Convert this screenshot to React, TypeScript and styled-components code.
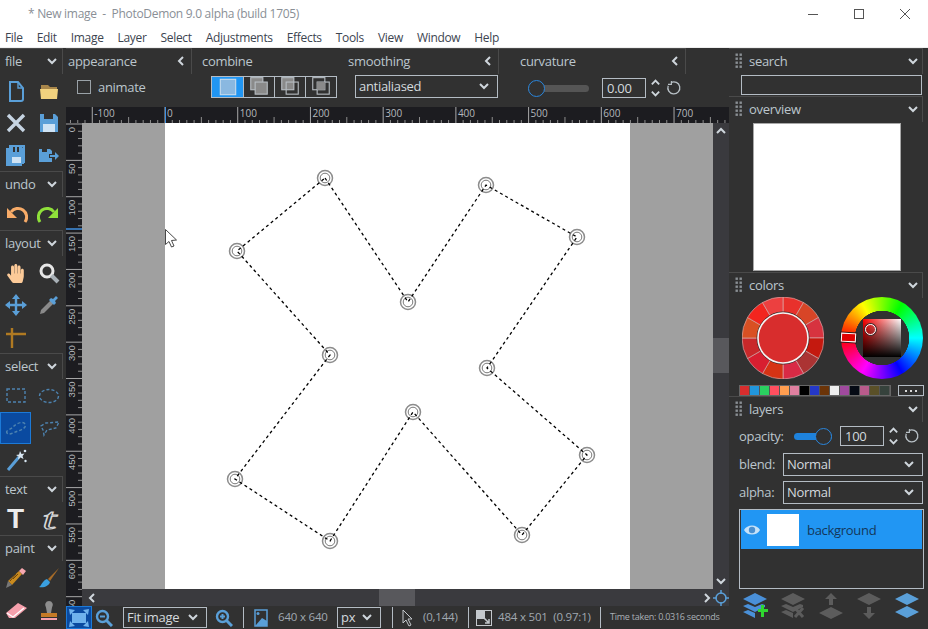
import React from "react";
import styled, { createGlobalStyle } from "styled-components";
import { FaHandPaper } from "react-icons/fa";

const GlobalStyle = createGlobalStyle`
  html, body {
    margin: 0;
    padding: 0;
    background: #313131;
  }
  * {
    box-sizing: border-box;
  }
`;

const BLUE = "#5a9fd8";
const DIM = "#4d83b0";
const LINE = "#b4bcc4";

function Chevron({ dir = "down", size = 12 }: { dir?: "down" | "left" | "right" | "up"; size?: number }) {
  const points = {
    down: "2,4 6,8 10,4",
    up: "2,8 6,4 10,8",
    left: "8,2 4,6 8,10",
    right: "4,2 8,6 4,10",
  }[dir];
  return (
    <svg width={size} height={size} viewBox="0 0 12 12">
      <polyline points={points} fill="none" stroke="#cfd6dc" strokeWidth="2" />
    </svg>
  );
}

function Spinner() {
  return (
    <SpinnerBox>
      <Chevron dir="up" size={11} />
      <Chevron dir="down" size={11} />
    </SpinnerBox>
  );
}

function Reset() {
  return (
    <ResetIcon width="16" height="16" viewBox="0 0 16 16">
      <path d="M5 2.600a6 6 0 1 1-2.800 3.200" fill="none" stroke="#b8c0c6" strokeWidth="1.300" />
      <path d="M5.400 1v3.400H2" fill="none" stroke="#b8c0c6" strokeWidth="1.100" />
    </ResetIcon>
  );
}

function Grip() {
  const dots = [0, 1, 2, 3].flatMap((r) => [0, 1].map((c) => [c * 4 + 0.5, r * 4 + 0.5]));
  return (
    <GripBox width="7" height="15" viewBox="0 0 7 15">
      {dots.map(([x, y]) => (
        <rect key={`${x}-${y}`} x={x} y={y} width="2.400" height="2.400" fill="#8a8f94" />
      ))}
    </GripBox>
  );
}

const icons: Record<string, React.ReactNode> = {
  newFile: (
    <svg width="24" height="24" viewBox="0 0 24 24">
      <path d="M6 3h8l5 6v11a2 2 0 0 1-2 2H6z" fill="none" stroke={BLUE} strokeWidth="2" />
      <path d="M14 3v6h5" fill="none" stroke={BLUE} strokeWidth="1.400" />
    </svg>
  ),
  open: (
    <svg width="24" height="24" viewBox="0 0 24 24">
      <path d="M4 6h7l2 2h7v3H4z" fill="#a8864a" />
      <path d="M3 10h18l-1 10H4z" fill="#f2d27e" />
    </svg>
  ),
  close: (
    <svg width="24" height="24" viewBox="0 0 24 24">
      <path d="M4 4l16 16M20 4L4 20" stroke="#c6d4e2" strokeWidth="3.400" />
    </svg>
  ),
  save: (
    <svg width="24" height="24" viewBox="0 0 24 24">
      <path d="M3 3h15l3 3v15H3z" fill={BLUE} />
      <rect x="7" y="3" width="9" height="5" fill="#313131" />
      <rect x="6" y="13" width="12" height="8" fill="#cfe3f4" />
    </svg>
  ),
  saveAs: (
    <svg width="24" height="24" viewBox="0 0 24 24">
      <path d="M5 2h16v18h-2V4H5zM2 5h3v16h13v2H2z" fill={BLUE} />
      <path d="M5 4h13l2 2v15H5z" fill={BLUE} />
      <path d="M9 4h2v5H9zM13 4h2v5h-2z" fill="#313131" />
      <rect x="8" y="14" width="9" height="6" fill="#cfe3f4" />
    </svg>
  ),
  exportCopy: (
    <svg width="24" height="24" viewBox="0 0 24 24">
      <path d="M2 6h11l2 2v3h-3v4h3v4H2z" fill={BLUE} />
      <rect x="5" y="6" width="5" height="3" fill="#313131" />
      <path d="M13 12h5V9l4 4-4 4v-3h-5z" fill={BLUE} />
    </svg>
  ),
  undo: (
    <svg width="24" height="24" viewBox="0 0 24 24">
      <path d="M21 20A8.500 8.500 0 0 0 7 10" fill="none" stroke="#f7ab68" strokeWidth="3" />
      <path d="M3 6v10h10z" fill="#f7ab68" />
    </svg>
  ),
  redo: (
    <svg width="24" height="24" viewBox="0 0 24 24">
      <path d="M3 20A8.500 8.500 0 0 1 17 10" fill="none" stroke="#8fe03a" strokeWidth="3" />
      <path d="M21 6v10H11z" fill="#8fe03a" />
    </svg>
  ),
  hand: <FaHandPaper size={19} color="#fcca98" />,
  zoom: (
    <svg width="24" height="24" viewBox="0 0 24 24">
      <circle cx="10" cy="10" r="6" fill="none" stroke="#e6e6e6" strokeWidth="3" />
      <path d="M14.500 14.500L21 21" stroke="#a8b0b6" strokeWidth="4" />
    </svg>
  ),
  move: (
    <svg width="24" height="24" viewBox="0 0 24 24">
      <path d="M12 3v18M3 12h18" stroke={BLUE} strokeWidth="2.400" />
      <path d="M12 1l4 5H8zM12 23l-4-5h8zM1 12l5-4v8zM23 12l-5 4V8z" fill={BLUE} />
    </svg>
  ),
  dropper: (
    <svg width="24" height="24" viewBox="0 0 24 24">
      <path d="M3 21l1-4L14 7l3 3L7 20z" fill="#8a8a8a" />
      <path d="M14 5l2 1 3-3 2 2-3 3 1 2-2 2-5-5z" fill={BLUE} />
    </svg>
  ),
  line: (
    <svg width="24" height="24" viewBox="0 0 24 24">
      <path d="M2 9h20M8 3v20" stroke="#b07a22" strokeWidth="2.400" />
    </svg>
  ),
  rectSelect: (
    <svg width="24" height="24" viewBox="0 0 24 24">
      <rect x="3" y="5" width="18" height="13" fill="none" stroke={DIM} strokeWidth="1.400" strokeDasharray="3 2" />
    </svg>
  ),
  ellipseSelect: (
    <svg width="24" height="24" viewBox="0 0 24 24">
      <ellipse cx="12" cy="12" rx="9.500" ry="6.500" fill="none" stroke={DIM} strokeWidth="1.400" strokeDasharray="3 2" />
    </svg>
  ),
  lassoSelect: (
    <svg width="24" height="24" viewBox="0 0 24 24">
      <path d="M3 17c-2-3 4-3 7-7 3-3 9-5 11-2s-3 6-7 7-9 5-11 2z" fill="none" stroke={DIM} strokeWidth="1.400" strokeDasharray="3 2" />
    </svg>
  ),
  polySelect: (
    <svg width="24" height="24" viewBox="0 0 24 24">
      <path d="M4 10l5-3 13-1-3 6-9 2-3 5-1-5z" fill="none" stroke={DIM} strokeWidth="1.400" strokeDasharray="3 2" />
    </svg>
  ),
  wand: (
    <svg width="24" height="24" viewBox="0 0 24 24">
      <path d="M4 22L15 9" stroke={BLUE} strokeWidth="3" />
      <path d="M16 3l1.500 3 3-.5-2 2.500 1 3-3-1.500-2.500 2 .5-3L12 7l3-.5z" fill="#d8e6f2" />
      <circle cx="21" cy="3" r="1.300" fill="#d8e6f2" />
      <circle cx="21.500" cy="13" r="1.200" fill="#d8e6f2" />
    </svg>
  ),
  pencil: (
    <svg width="24" height="24" viewBox="0 0 24 24">
      <path d="M8 19L18 8l-3-3L4 15z" fill="#c98a1e" />
      <path d="M9 13l5-5M6 15l6-7" stroke="#6a4510" strokeWidth="1" />
      <path d="M4 15l-2 7 6-3z" fill="#777" />
      <path d="M15 5l3-3 4 3-3 4z" fill="#f7a8b0" />
    </svg>
  ),
  brush: (
    <svg width="24" height="24" viewBox="0 0 24 24">
      <path d="M22 2L11 13l2 2z" fill="#a86c28" />
      <path d="M10 13l3 3c-1 4-6 6-11 5 3-2 3-6 8-8z" fill="#3aa0e0" />
    </svg>
  ),
  eraser: (
    <svg width="24" height="24" viewBox="0 0 24 24">
      <path d="M2 15L14 5l9 5-12 10-6 0z" fill="#f6a0ac" />
      <path d="M3 15l6 4 11-9" fill="none" stroke="#fff" strokeWidth="1.300" />
    </svg>
  ),
  stamp: (
    <svg width="24" height="24" viewBox="0 0 24 24">
      <path d="M12 3a4 4 0 0 1 3 6.500L14 15h-4l-1-5.500A4 4 0 0 1 12 3z" fill="#8e8e8e" />
      <rect x="4" y="15" width="16" height="4" fill="#c47a26" />
      <rect x="4" y="20" width="16" height="2" fill="#f6a0ac" />
    </svg>
  ),
};

const fileTools = ["newFile", "open", "close", "save", "saveAs", "exportCopy"];
const layoutTools = ["hand", "zoom", "move", "dropper", "line"];
const selectTools = ["rectSelect", "ellipseSelect", "lassoSelect", "polySelect", "wand"];
const paintTools = ["pencil", "brush", "eraser", "stamp"];

function ToolSection({ title, tools, active }: { title: string; tools: string[]; active?: string }) {
  return (
    <>
      <ToolHead>
        <span>{title}</span>
        <Chevron />
      </ToolHead>
      <ToolGrid>
        {tools.map((t) => (
          <ToolButton key={t} $active={t === active}>
            {icons[t]}
          </ToolButton>
        ))}
      </ToolGrid>
    </>
  );
}

function CombineIcon({ mode }: { mode: number }) {
  if (mode === 0) {
    return (
      <svg width="22" height="22" viewBox="0 0 20 20">
        <rect x="3" y="3" width="14" height="14" fill="#8ab8e0" stroke="#c8dcec" />
      </svg>
    );
  }
  const front = mode === 1 ? "#8a8a8a" : "none";
  const back = mode === 3 ? "none" : "#8a8a8a";
  return (
    <svg width="22" height="22" viewBox="0 0 20 20">
      <rect x="2.500" y="1.500" width="11" height="11" fill={back} stroke="#b8bec4" />
      <rect x="6.500" y="5.500" width="11" height="11" fill={front} stroke="#b8bec4" />
      {mode === 3 && <rect x="6.500" y="5.500" width="7" height="7" fill="#8a8a8a" />}
    </svg>
  );
}

const wheelColors = [
  "#e8312c", "#d84527", "#d7333f", "#c4190f", "#ab3333", "#d92a45",
  "#d63314", "#d81f30", "#c9282a", "#d95023", "#f2251f", "#ec4040",
];

function segmentPath(i: number) {
  const at = (deg: number, r: number) => {
    const a = ((deg - 90) * Math.PI) / 180;
    return `${(41 + r * Math.cos(a)).toFixed(2)} ${(41 + r * Math.sin(a)).toFixed(2)}`;
  };
  const a0 = i * 30;
  const a1 = a0 + 30;
  return `M${at(a0, 25)}L${at(a0, 41)}A41 41 0 0 1 ${at(a1, 41)}L${at(a1, 25)}A25 25 0 0 0 ${at(a0, 25)}Z`;
}

function ColorWheel() {
  return (
    <svg width="82" height="82" viewBox="0 0 82 82">
      {wheelColors.map((c, i) => (
        <path key={i} d={segmentPath(i)} fill={c} stroke="#d8b8b8" strokeWidth="0.600" />
      ))}
      <circle cx="41" cy="41" r="26" fill="#d82d2d" stroke="#2a2a2a" strokeWidth="1" />
      <circle cx="41" cy="41" r="25" fill="#d82d2d" stroke="#f4f4f4" strokeWidth="1.600" />
    </svg>
  );
}

const swatches = [
  "#d82d2d", "#2196dc", "#2ad060", "#ff4f5f", "#ff9e50", "#e080a0", "#000000", "#2438c8",
  "#6b3408", "#eeeeee", "#a04a9e", "#050a14", "#b85b8c", "#5a5028", "#36423c",
];

function Diamond({ y, fill }: { y: number; fill: string }) {
  return <path d={`M13 ${y}l12 6-12 6-12-6z`} fill={fill} />;
}

const GREY = "#5c5c5c";

function LayerActions() {
  return (
    <ActionRow>
      <svg width="26" height="26" viewBox="0 0 26 26">
        <Diamond y={0} fill="#4a90d8" />
        <path d="M1 13l5-2 7 3 7-3 3 1v2l-10 5z" fill="#4a90d8" />
        <path d="M1 19l5-2 7 3v5z" fill="#4a90d8" />
        <path d="M16 16h3v-4h3v4h4v3h-4v5h-3v-5h-3z" fill="#2fd62f" />
      </svg>
      <svg width="26" height="26" viewBox="0 0 26 26">
        <Diamond y={0} fill={GREY} />
        <path d="M1 13l5-2 7 3 7-3 3 1v2l-10 5z" fill={GREY} />
        <path d="M1 19l5-2 7 3v5z" fill={GREY} />
        <path d="M15 15l8 9M23 15l-8 9" stroke={GREY} strokeWidth="3" />
      </svg>
      <svg width="26" height="26" viewBox="0 0 26 26">
        <path d="M13 0l6 6h-4v6h-4V6H7z" fill={GREY} />
        <Diamond y={14} fill={GREY} />
      </svg>
      <svg width="26" height="26" viewBox="0 0 26 26">
        <Diamond y={0} fill={GREY} />
        <path d="M13 26l6-6h-4v-6h-4v6H7z" fill={GREY} />
      </svg>
      <svg width="26" height="26" viewBox="0 0 26 26">
        <Diamond y={0} fill={BLUE} />
        <Diamond y={13} fill={BLUE} />
      </svg>
    </ActionRow>
  );
}

const PX_PER_UNIT = 0.7272;

function HorizontalRuler() {
  const zero = 99;
  const ticks: React.ReactNode[] = [];
  for (let u = -130; u <= 780; u += 10) {
    const x = zero + u * PX_PER_UNIT;
    const major = u % 100 === 0;
    const mid = u % 50 === 0;
    ticks.push(
      <line key={u} x1={x} x2={x} y1={major ? 0 : mid ? 10 : 13} y2={16} stroke={major ? "#a8a8a8" : "#8e8e8e"} />,
    );
    if (major) {
      ticks.push(
        <RulerText key={`t${u}`} x={x + 2} y={10}>
          {u}
        </RulerText>,
      );
    }
  }
  return (
    <RulerStrip width="663" height="16" viewBox="0 0 663 16">
      {ticks}
      <line x1={99.500} x2={99.500} y1={0} y2={16} stroke="#3f8fe0" />
    </RulerStrip>
  );
}

function VerticalRuler() {
  const ticks: React.ReactNode[] = [];
  for (let u = 0; u <= 650; u += 10) {
    const y = 1 + u * PX_PER_UNIT;
    const major = u % 50 === 0;
    ticks.push(
      <line key={u} x1={major ? 0 : 12} x2={16} y1={y} y2={y} stroke={major ? "#a8a8a8" : "#8e8e8e"} />,
    );
    if (major) {
      ticks.push(
        <VerticalRulerText key={`t${u}`} transform={`translate(8.800 ${y + 3}) rotate(-90)`} textAnchor="end">
          {u}
        </VerticalRulerText>,
      );
    }
  }
  return (
    <RulerColumn width="16" height="483" viewBox="0 0 16 483">
      {ticks}
      <line x1={0} x2={16} y1={106} y2={106} stroke="#3f8fe0" strokeWidth="1.500" />
    </RulerColumn>
  );
}

// points are relative to the image's top left corner
const selection = [
  [160, 55], [243, 179], [321, 62], [412, 114], [322, 245], [422, 332],
  [357, 412], [248, 289], [165, 418], [70, 356], [165, 232], [72, 128],
];

function SelectionCanvas() {
  const d = selection.map((p) => p.join(",")).join(" ");
  return (
    <ImageSurface width="465" height="466" viewBox="0 0 465 466">
      {selection.map(([x, y]) => (
        <g key={`${x}-${y}`} fill="none">
          <circle cx={x} cy={y} r="7.500" stroke="#8c8c8c" strokeWidth="1.500" />
          <circle cx={x} cy={y} r="4.800" stroke="#7a7a7a" strokeWidth="1" />
        </g>
      ))}
      <polygon points={d} fill="none" stroke="#000" strokeWidth="1.300" strokeDasharray="3 3" />
      <path d="M.5 106.500v15l3.500-3 2.500 5.500 2.500-1-2.500-5.500 5-.5z" fill="#fff" stroke="#333" strokeWidth="0.900" />
    </ImageSurface>
  );
}

export default function App() {
  return (
    <>
      <GlobalStyle />
      <Window>
        <TitleBar>
          <TitleText>* New image&nbsp; -&nbsp; PhotoDemon 9.0 alpha (build 1705)</TitleText>
          <WindowControls>
            <svg width="12" height="12" viewBox="0 0 12 12">
              <path d="M1 6.500h10" stroke="#555" />
            </svg>
            <svg width="12" height="12" viewBox="0 0 12 12">
              <rect x="1.500" y="1.500" width="9" height="9" fill="none" stroke="#555" />
            </svg>
            <svg width="12" height="12" viewBox="0 0 12 12">
              <path d="M1 1l10 10M11 1L1 11" stroke="#555" />
            </svg>
          </WindowControls>
        </TitleBar>
        <MenuBar>
          {["File", "Edit", "Image", "Layer", "Select", "Adjustments", "Effects", "Tools", "View", "Window", "Help"].map((m) => (
            <span key={m}>{m}</span>
          ))}
        </MenuBar>
        <Main>
          <LeftToolbar>
            <ToolSection title="file" tools={fileTools} />
            <ToolSection title="undo" tools={["undo", "redo"]} />
            <ToolSection title="layout" tools={layoutTools} />
            <ToolSection title="select" tools={selectTools} active="lassoSelect" />
            <ToolHead>
              <span>text</span>
              <Chevron />
            </ToolHead>
            <ToolGrid>
              <ToolButton>
                <BoldT>T</BoldT>
              </ToolButton>
              <ToolButton>
                <ScriptT>t</ScriptT>
              </ToolButton>
            </ToolGrid>
            <ToolSection title="paint" tools={paintTools} />
          </LeftToolbar>

          <Center>
            <OptionsRow>
              <OptionPanel $w={126}>
                <OptionHead $pl={2}>
                  <span>appearance</span>
                  <Chevron dir="left" />
                </OptionHead>
                <OptionBody>
                  <AnimateLabel>
                    <CheckBox />
                    animate
                  </AnimateLabel>
                </OptionBody>
              </OptionPanel>
              <OptionPanel $w={148}>
                <OptionHead $pl={10} $plain>
                  <span>combine</span>
                </OptionHead>
                <OptionBody>
                  <CombineGroup>
                    {[0, 1, 2, 3].map((m) => (
                      <CombineButton key={m} $active={m === 0}>
                        <CombineIcon mode={m} />
                      </CombineButton>
                    ))}
                  </CombineGroup>
                </OptionBody>
              </OptionPanel>
              <OptionPanel $w={159}>
                <OptionHead $pl={8}>
                  <span>smoothing</span>
                  <Chevron dir="left" />
                </OptionHead>
                <SmoothingBody>
                  <Select $w={143} $h={23}>
                    antialiased
                    <Chevron />
                  </Select>
                </SmoothingBody>
              </OptionPanel>
              <OptionPanel $w={187}>
                <OptionHead $pl={21}>
                  <span>curvature</span>
                  <Chevron dir="left" />
                </OptionHead>
                <CurvatureBody>
                  <Slider $w={61} $fill={0}>
                    <SliderKnob $at={0} />
                  </Slider>
                  <NumberBox $w={44} $ml={13}>
                    0.00
                  </NumberBox>
                  <Spinner />
                  <Reset />
                </CurvatureBody>
              </OptionPanel>
            </OptionsRow>
            <HorizontalRuler />
            <CanvasArea>
              <VerticalRuler />
              <CanvasColumn>
                <Workspace>
                  <Backdrop>
                    <SelectionCanvas />
                  </Backdrop>
                  <VScroll>
                    <Chevron dir="up" />
                    <VThumb />
                    <Chevron dir="down" />
                  </VScroll>
                </Workspace>
                <HScroll>
                  <Chevron dir="left" />
                  <HThumb />
                  <Chevron dir="right" />
                  <svg width="16" height="16" viewBox="0 0 16 16">
                    <circle cx="8" cy="8" r="5" fill="none" stroke={BLUE} strokeWidth="1.500" />
                    <path d="M8 0v4M8 12v4M0 8h4M12 8h4" stroke={BLUE} strokeWidth="1.500" />
                  </svg>
                </HScroll>
              </CanvasColumn>
            </CanvasArea>
            <StatusBar>
              <FitButton>
                <svg width="20" height="18" viewBox="0 0 20 18">
                  <rect x="3" y="4" width="14" height="10" fill="#6fb2ec" />
                  <path d="M0 0l6 1-5 5zM20 0l-6 1 5 5zM0 18l6-1-5-5zM20 18l-6-1 5-5z" fill="#6fb2ec" />
                </svg>
              </FitButton>
              <StatusIconSlot $w={24}>
                <svg width="18" height="18" viewBox="0 0 18 18">
                  <circle cx="7.500" cy="7.500" r="5.500" fill="none" stroke={BLUE} strokeWidth="2.400" />
                  <path d="M5 7.500h5" stroke={BLUE} strokeWidth="2" />
                  <path d="M11.500 11.500L17 17" stroke={BLUE} strokeWidth="3" />
                </svg>
              </StatusIconSlot>
              <Select $w={84} $h={21} $ml={7}>
                Fit image
                <Chevron />
              </Select>
              <StatusIconSlot $w={34}>
                <svg width="18" height="18" viewBox="0 0 18 18">
                  <circle cx="7.500" cy="7.500" r="5.500" fill="none" stroke={BLUE} strokeWidth="2.400" />
                  <path d="M5 7.500h5M7.500 5v5" stroke={BLUE} strokeWidth="2" />
                  <path d="M11.500 11.500L17 17" stroke={BLUE} strokeWidth="3" />
                </svg>
              </StatusIconSlot>
              <Separator $ml={2} />
              <StatusIconSlot $w={34}>
                <svg width="14" height="18" viewBox="0 0 14 18">
                  <rect x="1" y="1" width="12" height="16" fill="none" stroke={BLUE} strokeWidth="1.500" />
                  <path d="M2 16l6-7 5 3v5H2z" fill={BLUE} />
                  <circle cx="4" cy="4.500" r="1.500" fill={BLUE} />
                </svg>
              </StatusIconSlot>
              <StatusText $w={59}>640 x 640</StatusText>
              <Select $w={44} $h={21}>
                px
                <Chevron />
              </Select>
              <Separator $ml={11} />
              <StatusIconSlot $w={30}>
                <svg width="12" height="18" viewBox="0 0 12 18">
                  <path d="M1 1v13l3-3 3 6 2-1-3-6h4z" fill="none" stroke="#c4c8cc" />
                </svg>
              </StatusIconSlot>
              <StatusText $w={45}>(0,144)</StatusText>
              <Separator />
              <StatusIconSlot $w={29}>
                <svg width="16" height="16" viewBox="0 0 16 16">
                  <rect x="0.500" y="0.500" width="15" height="15" fill="none" stroke="#c4c8cc" />
                  <rect x="1" y="1" width="8" height="8" fill="#c4c8cc" />
                  <path d="M8 8l5 5M13 9v4H9" fill="none" stroke="#c4c8cc" strokeWidth="1.500" />
                </svg>
              </StatusIconSlot>
              <StatusText $w={102}>484 x 501&nbsp; (0.97:1)</StatusText>
              <Separator />
              <TimeText>Time taken: 0.0316 seconds</TimeText>
            </StatusBar>
          </Center>

          <RightPanel>
            <PanelHead>
              <Grip />
              <span>search</span>
              <Chevron />
            </PanelHead>
            <SearchInput />
            <PanelHead>
              <Grip />
              <span>overview</span>
              <Chevron />
            </PanelHead>
            <Overview />
            <PanelHead>
              <Grip />
              <span>colors</span>
              <Chevron />
            </PanelHead>
            <WheelRow>
              <ColorWheel />
              <HueRing>
                <SvSquare>
                  <SvMarker />
                </SvSquare>
                <HueMarker />
              </HueRing>
            </WheelRow>
            <PaletteRow>
              <Palette>
                {swatches.map((c) => (
                  <Swatch key={c} $c={c} />
                ))}
              </Palette>
              <MoreButton>
                <i />
                <i />
                <i />
              </MoreButton>
            </PaletteRow>
            <PanelHead>
              <Grip />
              <span>layers</span>
              <Chevron />
            </PanelHead>
            <OpacityRow>
              <FieldLabel $w={55}>opacity:</FieldLabel>
              <Slider $w={38} $fill={100}>
                <SliderKnob $at={100} />
              </Slider>
              <NumberBox $w={44} $ml={8}>
                100
              </NumberBox>
              <Spinner />
              <Reset />
            </OpacityRow>
            <FieldRow>
              <FieldLabel>blend:</FieldLabel>
              <Select $w={140} $h={23}>
                Normal
                <Chevron />
              </Select>
            </FieldRow>
            <FieldRow>
              <FieldLabel>alpha:</FieldLabel>
              <Select $w={140} $h={23}>
                Normal
                <Chevron />
              </Select>
            </FieldRow>
            <LayerList>
              <LayerRow>
                <svg width="18" height="12" viewBox="0 0 18 12">
                  <path d="M1 6c3-6 13-6 16 0-3 6-13 6-16 0z" fill="#c6e2f8" />
                  <circle cx="9" cy="6" r="3.200" fill="#4a90d0" />
                </svg>
                <LayerThumb />
                <LayerName>background</LayerName>
              </LayerRow>
            </LayerList>
            <LayerActions />
          </RightPanel>
        </Main>
      </Window>
    </>
  );
}

const FONT = `"Open Sans", "Noto Sans", sans-serif`;

const Window = styled.div`
  width: 928px;
  height: 629px;
  display: flex;
  flex-direction: column;
  overflow: hidden;
  font-family: ${FONT};
  letter-spacing: -0.3px;
  color: #bcc6cd;
  background: #fff;
`;

const TitleBar = styled.div`
  height: 27px;
  display: flex;
  align-items: center;
  padding-left: 28px;
`;

const TitleText = styled.div`
  flex: 1;
  font-size: 12px;
  color: #8a8f96;
`;

const WindowControls = styled.div`
  display: flex;
  gap: 34px;
  padding-right: 17px;
`;

const MenuBar = styled.div`
  height: 21px;
  display: flex;
  align-items: center;
  gap: 14px;
  padding-left: 5px;
  font-size: 12px;
  letter-spacing: -0.32px;
  color: #3c4450;
  border-bottom: 1px solid #eeeeee;
`;

const Main = styled.div`
  flex: 1;
  display: flex;
  min-height: 0;
  background: #313131;
`;

const LeftToolbar = styled.div`
  width: 66px;
  flex: none;
`;

const ToolHead = styled.div`
  height: 26px;
  margin-right: 3px;
  padding: 0 4px 2px 5px;
  display: flex;
  align-items: center;
  justify-content: space-between;
  font-size: 13px;
  border-top: 1px solid #4a4a4a;
  border-right: 1px solid #4a4a4a;
`;

const ToolGrid = styled.div`
  padding-top: 1px;
  display: grid;
  grid-template-columns: 31px 32px;
  grid-auto-rows: 32px;
  column-gap: 2px;
`;

const ToolButton = styled.div<{ $active?: boolean }>`
  display: flex;
  align-items: center;
  justify-content: center;
  background: ${(p) => (p.$active ? "#0a4aa0" : "transparent")};
  outline: ${(p) => (p.$active ? "1px solid #1c7ad8" : "none")};
  outline-offset: -1px;
`;

const BoldT = styled.span`
  font-family: "Liberation Sans", sans-serif;
  font-weight: 700;
  font-size: 28px;
  line-height: 1;
  color: #ececec;
`;

const ScriptT = styled.span`
  font-family: "Liberation Serif", serif;
  font-style: italic;
  font-size: 30px;
  line-height: 1;
  color: transparent;
  -webkit-text-stroke: 1px #d8d8d8;
  transform: scaleX(1.7);
`;

const Center = styled.div`
  width: 663px;
  flex: none;
  display: flex;
  flex-direction: column;
`;

const OptionsRow = styled.div`
  height: 59px;
  flex: none;
  display: flex;
`;

const OptionPanel = styled.div<{ $w: number }>`
  width: ${(p) => p.$w}px;
  flex: none;
  display: flex;
  flex-direction: column;
`;

const OptionHead = styled.div<{ $plain?: boolean; $pl: number }>`
  height: 26px;
  flex: none;
  display: flex;
  align-items: center;
  justify-content: space-between;
  padding: 0 4px 2px ${(p) => p.$pl}px;
  font-size: 13px;
  border-top: ${(p) => (p.$plain ? "1px solid transparent" : "1px solid #4a4a4a")};
  border-right: ${(p) => (p.$plain ? "none" : "1px solid #4a4a4a")};
`;

const OptionBody = styled.div`
  flex: 1;
  display: flex;
  align-items: center;
  padding: 0 0 7px 11px;
`;

const SmoothingBody = styled(OptionBody)`
  padding: 1px 0 0 15px;
  align-items: flex-start;
`;

const CurvatureBody = styled(OptionBody)`
  padding: 0 0 5px 29px;
`;

const AnimateLabel = styled.label`
  display: flex;
  align-items: center;
  gap: 7px;
  font-size: 13px;
`;

const CheckBox = styled.span`
  width: 14px;
  height: 14px;
  border: 1px solid #9aa2a8;
`;

const CombineGroup = styled.div`
  margin-left: 8px;
  display: flex;
  height: 22px;
  border: 1px solid ${LINE};
`;

const CombineButton = styled.div<{ $active?: boolean }>`
  width: 31px;
  display: flex;
  align-items: center;
  justify-content: center;
  background: ${(p) => (p.$active ? "#2196f3" : "transparent")};
  & + & {
    border-left: 1px solid ${LINE};
  }
`;

const Select = styled.div<{ $w: number; $h: number; $ml?: number }>`
  width: ${(p) => p.$w}px;
  height: ${(p) => p.$h}px;
  margin-left: ${(p) => p.$ml ?? 0}px;
  flex: none;
  display: flex;
  align-items: center;
  justify-content: space-between;
  padding: 0 7px 1px 3px;
  font-size: 13px;
  color: #d4dade;
  border: 1px solid ${LINE};
`;

const Slider = styled.div<{ $w: number; $fill: number }>`
  position: relative;
  width: ${(p) => p.$w}px;
  height: 7px;
  flex: none;
  border-radius: 4px;
  background: ${(p) => (p.$fill ? "#1e82dc" : "#555555")};
`;

const SliderKnob = styled.span<{ $at: number }>`
  position: absolute;
  top: -5px;
  left: ${(p) => (p.$at ? "auto" : "0")};
  right: ${(p) => (p.$at ? "0" : "auto")};
  width: 17px;
  height: 17px;
  border-radius: 50%;
  border: 1.5px solid #2a86dc;
  background: #313131;
`;

const NumberBox = styled.div<{ $w: number; $ml: number }>`
  width: ${(p) => p.$w}px;
  height: 20px;
  margin-left: ${(p) => p.$ml}px;
  flex: none;
  padding: 0 4px;
  font-size: 13px;
  line-height: 18px;
  color: #d4dade;
  border: 1px solid ${LINE};
`;

const SpinnerBox = styled.div`
  width: 14px;
  margin-left: 2px;
  display: flex;
  flex-direction: column;
  align-items: center;
  line-height: 0;
`;

const ResetIcon = styled.svg`
  margin-left: 4px;
  flex: none;
`;

const CanvasArea = styled.div`
  flex: 1;
  display: flex;
  min-height: 0;
`;

const CanvasColumn = styled.div`
  flex: 1;
  display: flex;
  flex-direction: column;
  min-width: 0;
`;

const Workspace = styled.div`
  flex: 1;
  display: flex;
  min-height: 0;
`;

const RulerStrip = styled.svg`
  display: block;
  flex: none;
  background: #1c1c20;
`;

const RulerColumn = styled.svg`
  display: block;
  flex: none;
  background: #1c1c20;
`;

const RulerText = styled.text`
  font-family: ${FONT};
  font-size: 10px;
  letter-spacing: 0;
  fill: #b4b8bc;
`;

const VerticalRulerText = styled(RulerText)`
  font-family: "Liberation Sans", sans-serif;
  font-size: 9.5px;
`;

const Backdrop = styled.div`
  flex: 1;
  display: flex;
  justify-content: center;
  background: #a0a0a0;
`;

const ImageSurface = styled.svg`
  display: block;
  background: #ffffff;
`;

const VScroll = styled.div`
  width: 16px;
  flex: none;
  padding: 2px 0;
  display: flex;
  flex-direction: column;
  align-items: center;
  background: #3a3a3e;
`;

const VThumb = styled.div`
  width: 16px;
  height: 35px;
  flex: none;
  margin: 201px 0 auto;
  background: #58585c;
`;

const HScroll = styled.div`
  height: 17px;
  flex: none;
  display: flex;
  align-items: center;
  padding-left: 4px;
  background: #3a3a3e;
`;

const HThumb = styled.div`
  width: 36px;
  height: 17px;
  flex: none;
  margin: 0 auto 0 281px;
  background: #58585c;
`;

const StatusBar = styled.div`
  height: 23px;
  flex: none;
  display: flex;
  align-items: center;
  background: #313131;
  font-size: 12px;
`;

const FitButton = styled.div`
  width: 26px;
  height: 23px;
  flex: none;
  display: flex;
  align-items: center;
  justify-content: center;
  background: #0a4aa0;
  border: 1px solid #1c7ad8;
`;

const StatusIconSlot = styled.div<{ $w: number }>`
  width: ${(p) => p.$w}px;
  flex: none;
  display: flex;
  align-items: center;
  justify-content: center;
`;

const Separator = styled.div<{ $ml?: number }>`
  width: 1px;
  height: 21px;
  margin-left: ${(p) => p.$ml ?? 0}px;
  flex: none;
  background: #b4bcc4;
`;

const StatusText = styled.div<{ $w: number }>`
  width: ${(p) => p.$w}px;
  flex: none;
  padding-bottom: 2px;
  font-size: 11.5px;
  letter-spacing: -0.2px;
  white-space: nowrap;
  color: #a0a8b0;
`;

const TimeText = styled.div`
  margin-left: 9px;
  padding-bottom: 2px;
  font-size: 9px;
  letter-spacing: -0.25px;
  white-space: nowrap;
  color: #aab0b6;
`;

const RightPanel = styled.div`
  width: 199px;
  flex: none;
`;

const PanelHead = styled.div`
  height: 26px;
  display: flex;
  align-items: center;
  margin-right: 5px;
  padding: 0 3px 2px 6px;
  font-size: 13px;
  border-top: 1px solid #4a4a4a;
  border-right: 1px solid #4a4a4a;
  span {
    flex: 1;
    margin-left: 7px;
  }
`;

const GripBox = styled.svg`
  flex: none;
`;

const SearchInput = styled.div`
  width: 181px;
  height: 20px;
  margin: 1px 0 1px 12px;
  border: 1px solid ${LINE};
`;

const Overview = styled.div`
  width: 148px;
  height: 148px;
  margin: 1px 0 1px 24px;
  background: #fff;
  border: 1px solid #a8a8a8;
`;

const WheelRow = styled.div`
  height: 82px;
  display: flex;
  justify-content: space-between;
  margin: -1px 5px 1px 13px;
`;

const HueRing = styled.div`
  position: relative;
  width: 82px;
  height: 82px;
  border-radius: 50%;
  background:
    radial-gradient(circle at center, #313131 0 27px, transparent 27.5px),
    conic-gradient(from 270deg, #f00, #ff0, #0f0, #0ff, #00f, #f0f, #f00);
`;

const SvSquare = styled.div`
  position: absolute;
  left: 22px;
  top: 22px;
  width: 38px;
  height: 38px;
  background:
    linear-gradient(to top, #000, transparent),
    linear-gradient(to right, #f00, #fff);
`;

const SvMarker = styled.span`
  position: absolute;
  left: 2px;
  top: 5px;
  width: 11px;
  height: 11px;
  border-radius: 50%;
  border: 1.5px solid #fff;
  box-shadow: 0 0 0 1px #333;
`;

const HueMarker = styled.span`
  position: absolute;
  left: 0;
  top: 36px;
  width: 15px;
  height: 9px;
  background: #e00000;
  border: 1.5px solid #fff;
  box-shadow: 0 0 0 1px #222;
  transform: rotate(3deg);
`;

const PaletteRow = styled.div`
  display: flex;
  align-items: center;
  justify-content: space-between;
  height: 16px;
  margin: 0 4px 0 10px;
  padding-top: 5px;
`;

const Palette = styled.div`
  display: flex;
  border: 1px solid #666;
`;

const Swatch = styled.span<{ $c: string }>`
  width: 10px;
  height: 9px;
  background: ${(p) => p.$c};
  border-right: 1px solid #555;
`;

const MoreButton = styled.div`
  width: 26px;
  height: 11px;
  display: flex;
  align-items: center;
  justify-content: center;
  gap: 3px;
  border: 1px solid ${LINE};
  i {
    width: 2px;
    height: 2px;
    background: #d8d8d8;
  }
`;

const OpacityRow = styled.div`
  height: 28px;
  display: flex;
  align-items: center;
  padding-left: 10px;
`;

const FieldRow = styled.div`
  height: 28px;
  display: flex;
  align-items: center;
  padding-left: 10px;
`;

const FieldLabel = styled.span<{ $w?: number }>`
  width: ${(p) => p.$w ?? 44}px;
  flex: none;
  font-size: 13px;
`;

const LayerList = styled.div`
  width: 185px;
  height: 80px;
  margin: 3px 0 0 10px;
  padding: 0 1px;
  border: 1px solid ${LINE};
`;

const LayerRow = styled.div`
  height: 39px;
  display: flex;
  align-items: center;
  padding-left: 2px;
  background: #2196f3;
`;

const LayerThumb = styled.div`
  width: 32px;
  height: 32px;
  margin-left: 6px;
  background: #fff;
`;

const LayerName = styled.span`
  margin-left: 8px;
  font-size: 13px;
  color: #14365a;
`;

const ActionRow = styled.div`
  display: flex;
  justify-content: space-between;
  margin: 4px 8px 0 13px;
`;
